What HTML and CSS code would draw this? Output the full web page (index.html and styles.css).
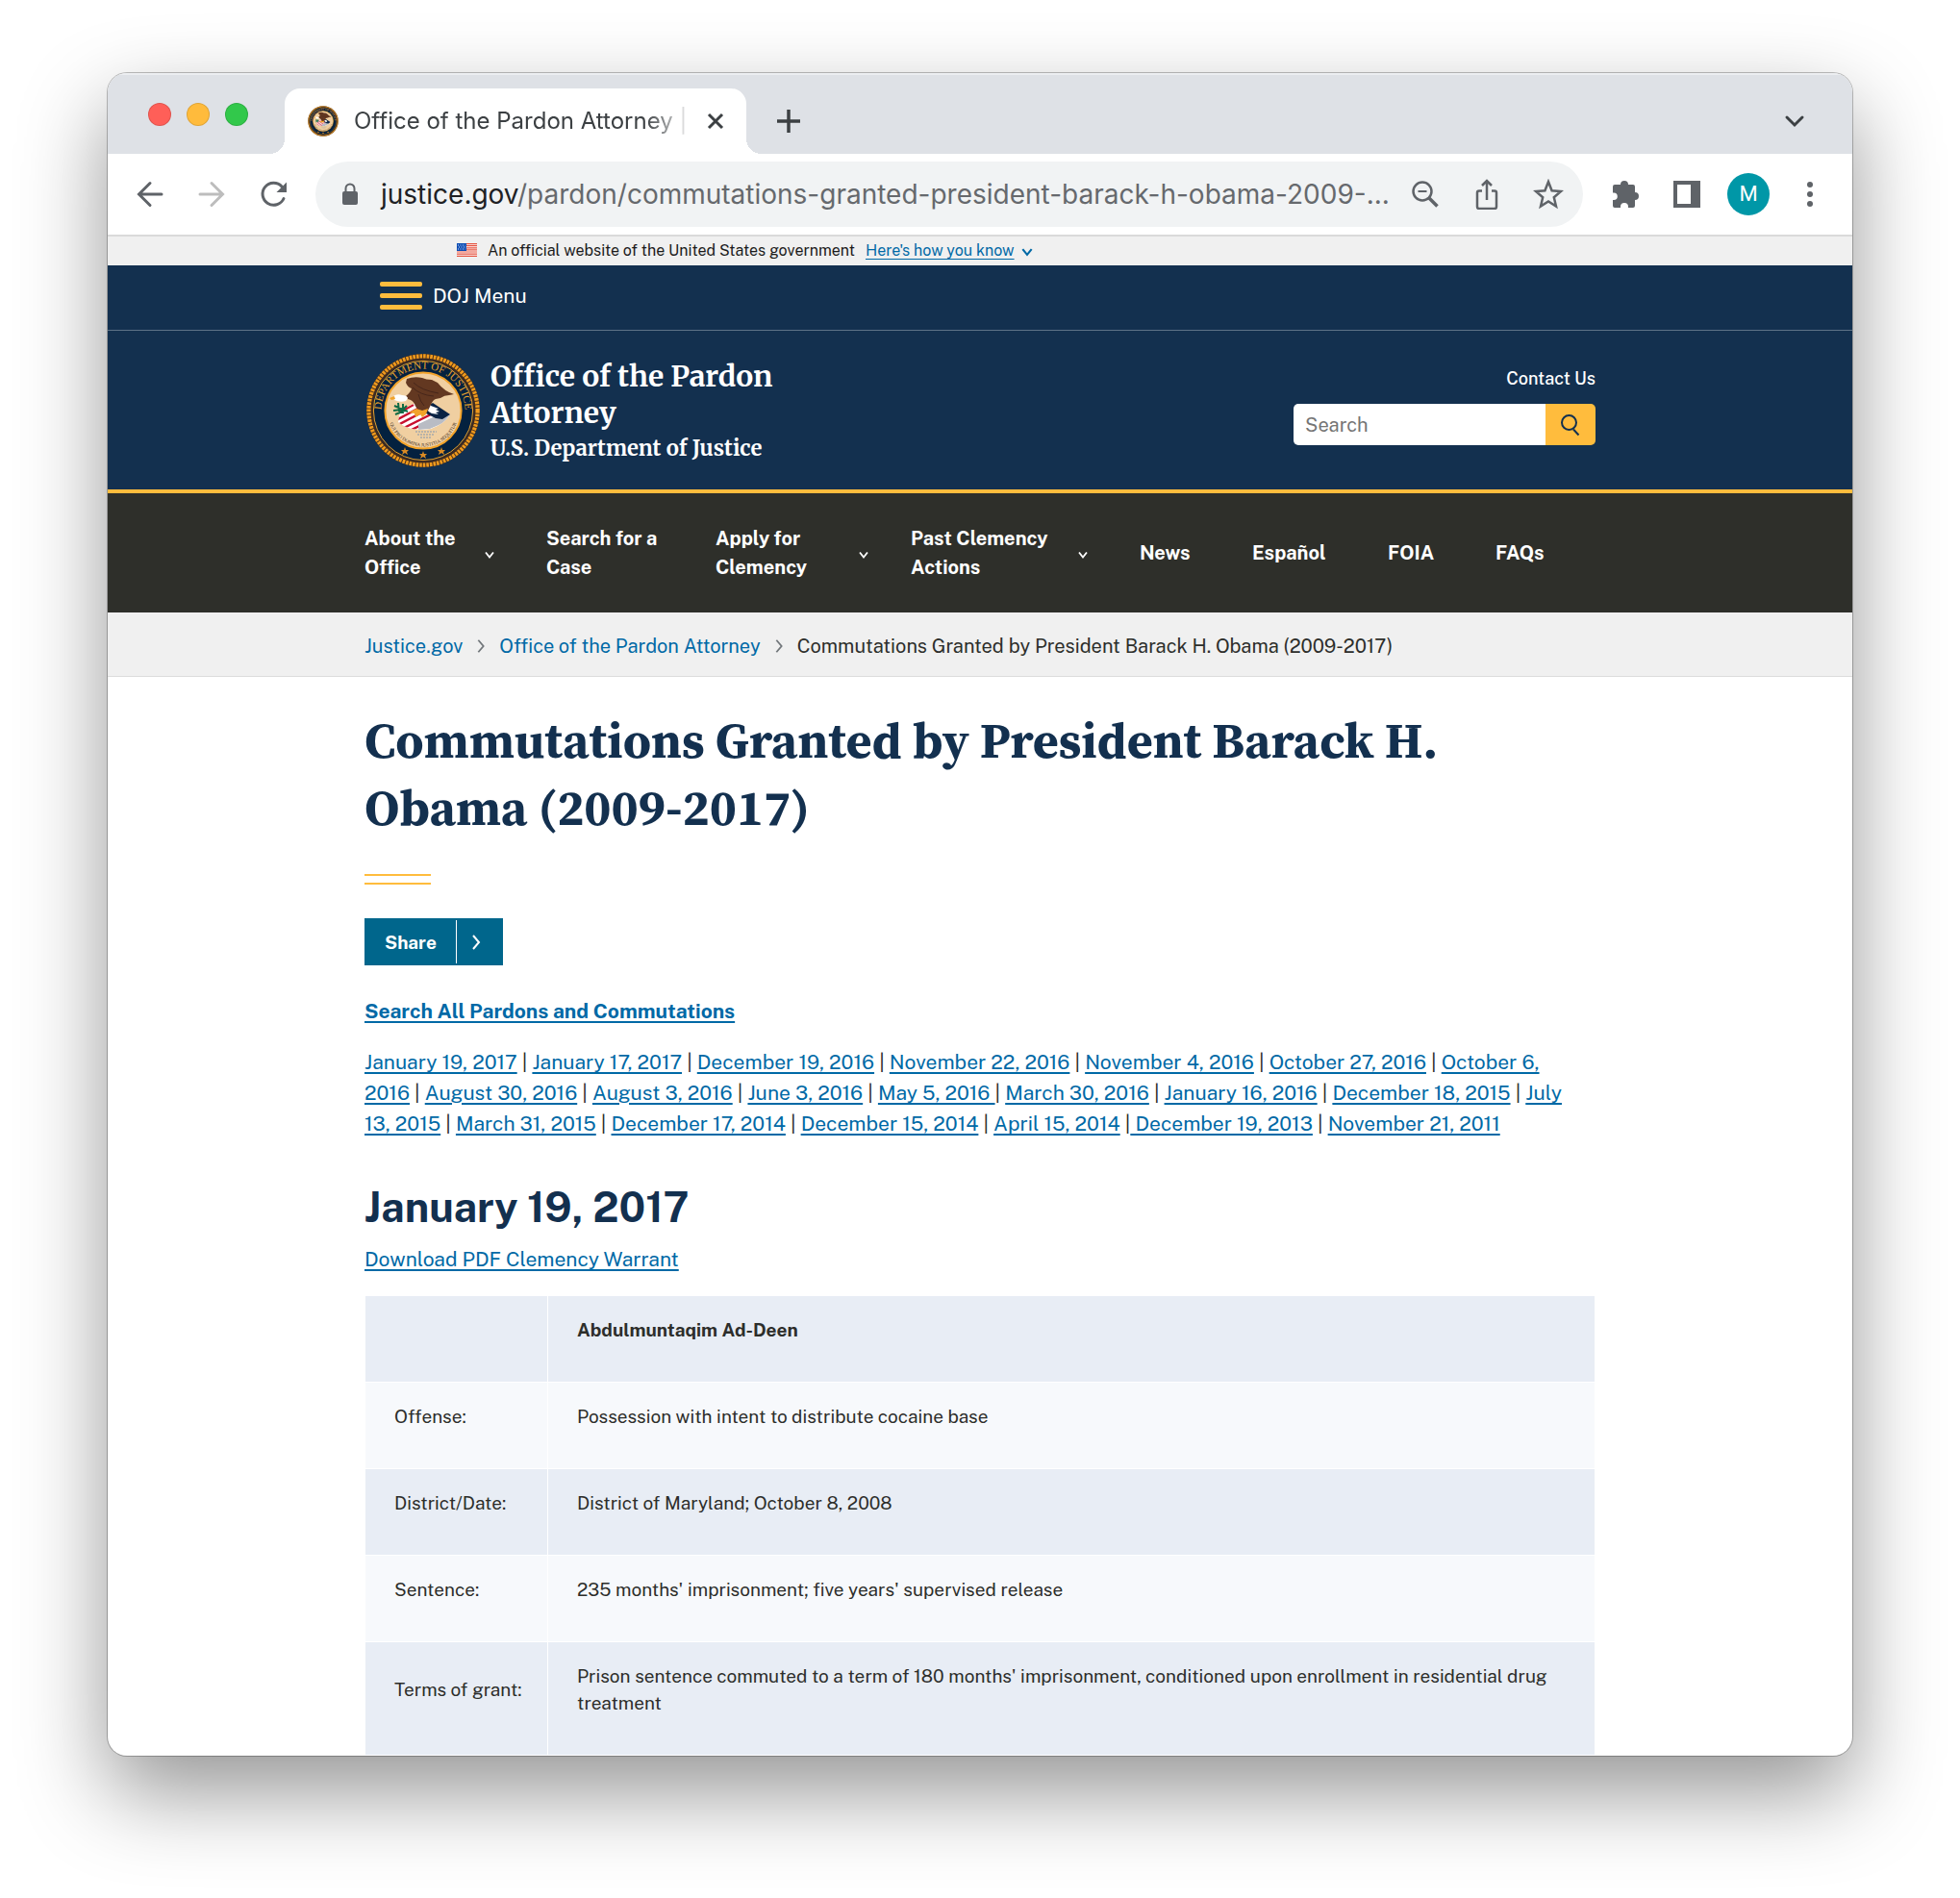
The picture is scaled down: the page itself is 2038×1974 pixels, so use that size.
FILE: index.html
```
<!DOCTYPE html>
<html lang="en">
<head>
<meta charset="utf-8">
<title>Office of the Pardon Attorney | Commutations Granted by President Barack H. Obama (2009-2017)</title>
<link rel="stylesheet" href="styles.css">
</head>
<body>
<svg class="defs" aria-hidden="true">
  <defs>
    <clipPath id="shield-clip"><path d="M36 60 L50 53 L66 55 L88 64 Q82 74 68 79 Q50 82 38 75 L34 72Z"/></clipPath>
    <path id="arc-top" d="M17.600 69.800 A43.500 43.500 0 1 1 102.400 69.800"/>
    <path id="arc-bottom" d="M23.500 53 A37.200 37.200 0 1 0 96.500 53"/>
    <symbol id="seal" viewBox="0 0 120 120">
      <circle cx="60" cy="60" r="59" fill="#4a3220"/>
      <circle cx="60" cy="60" r="56.600" fill="none" stroke="#f09a1c" stroke-width="4.200" stroke-dasharray="2.600 1"/>
      <circle cx="60" cy="60" r="53" fill="#04213f" stroke="#3d2b22" stroke-width="2"/>
      <circle cx="60" cy="60" r="51.600" fill="none" stroke="#e9a12c" stroke-width="1"/>
      <circle cx="60" cy="60" r="39.600" fill="#f0cfa1" stroke="#f2a32a" stroke-width="2"/>
      <text class="seal-name"><textPath href="#arc-top" startOffset="50%">DEPARTMENT OF JUSTICE</textPath></text>
      <g clip-path="url(#shield-clip)">
        <path fill="#fff" d="M30 50h60v32H30z"/>
        <path stroke="#c8102e" stroke-width="2.400" d="M28 66l22-12M28 72l34-18M30 77l40-21M36 80l38-19M44 82l36-18"/>
        <path fill="#b9bcc4" d="M55 74l26-12 8 2-8 9-14 6-12 1z"/>
      </g>
      <path fill="#0a2344" d="M62 57l8-5 18 12-8 5-7-1-10-5z"/>
      <path fill="#fff" d="M62 50q5 1 6 5l8 3-3 1 4 2-4 1 3 2-7-1q-6-3-6-7z"/>
      <path fill="#633821" d="M43 27q8-3 16-1 4 2 10 2l6 3q7 9 17 12l-5 1q-5 0-9 3l-5 1q-3 1-5 6l-4 8-7-1q-5-4-6-8-2-4-7-5l-2-3q5-4 6-8-4-1-6-6z"/>
      <path fill="none" stroke="#47261a" stroke-width="1" d="M50 31q8 8 26 11M49 36q8 8 22 9M55 43q2 8 6 12"/>
      <path fill="#fff" d="M29 45q4-3 9-1 5 0 6 3l-2 3q-6 2-12-1z"/>
      <path fill="#f2a32a" d="M30 45l-5 2 2 2 4-1zM45 62l8-4 6 2 6-2-2 6-4 3-2-3-5 3-1-4z"/>
      <path fill="none" stroke="#0f6b45" stroke-width="2" d="M30 55l14 6M34 52l1 9M39 53v10M29 60l9-1M31 64l10-4M43 55l-4 4"/>
      <path fill="none" stroke="#b9b3a8" stroke-width="2" stroke-dasharray="2 1" d="M52 82h22M54 85h18M57 88h12"/>
      <text class="seal-motto"><textPath href="#arc-bottom" startOffset="50%">QUI PRO DOMINA JUSTITIA SEQUITUR</textPath></text>
      <path fill="#d98a23" d="M41 98l1 3h3l-2 2 1 3-3-2-3 2 1-3-2-2h3zM60 102l1 3h3l-2 2 1 3-3-2-3 2 1-3-2-2h3zM79 98l1 3h3l-2 2 1 3-3-2-3 2 1-3-2-2h3z"/>
    </symbol>
    <symbol id="chevron-down" viewBox="0 0 12 12"><path d="M2 3.500l4 5 4-5" fill="none" stroke="currentColor" stroke-width="1.800"/></symbol>
    <symbol id="chevron-right" viewBox="0 0 10 18"><path d="M2 2l6 7-6 7" fill="none" stroke="currentColor" stroke-width="2"/></symbol>
  </defs>
</svg>

<div class="window">
  <div class="tabstrip">
    <div class="lights">
      <button class="light light-close" aria-label="Close window"></button>
      <button class="light light-min" aria-label="Minimize window"></button>
      <button class="light light-zoom" aria-label="Zoom window"></button>
    </div>
    <div class="tab">
      <svg class="favicon" aria-hidden="true"><use href="#seal"/></svg>
      <span class="tab-title">Office of the Pardon Attorney |</span>
      <button class="icon-btn" aria-label="Close tab"><svg viewBox="0 0 32 32"><path d="M9 9l14 14M23 9L9 23" stroke="#3c4043" stroke-width="3"/></svg></button>
    </div>
    <button class="icon-btn new-tab" aria-label="New tab"><svg viewBox="0 0 32 32"><path d="M16 4v24M4 16h24" stroke="#3c4043" stroke-width="3.500"/></svg></button>
    <button class="icon-btn tab-search" aria-label="Search tabs"><svg viewBox="0 0 32 32"><path d="M8 12l8 8 8-8" fill="none" stroke="#3c4043" stroke-width="3" stroke-linecap="round"/></svg></button>
  </div>

  <div class="toolbar">
    <div class="nav-buttons">
      <button class="icon-btn" aria-label="Back"><svg viewBox="0 0 32 32"><path d="M28 16H5M16 4.500L4.500 16 16 27.500" fill="none" stroke="#5f6368" stroke-width="3" stroke-linecap="round"/></svg></button>
      <button class="icon-btn" aria-label="Forward"><svg viewBox="0 0 32 32"><path d="M4 16h23M16 4.500L27.500 16 16 27.500" fill="none" stroke="#bdbdbd" stroke-width="3" stroke-linecap="round"/></svg></button>
      <button class="icon-btn" aria-label="Reload"><svg viewBox="0 0 32 32"><path d="M27 20.500A11.500 11.500 0 1 1 25 8" fill="none" stroke="#5f6368" stroke-width="3" stroke-linecap="round"/><path d="M30 3.500V14H19.500z" fill="#5f6368"/></svg></button>
    </div>
    <div class="omnibox">
      <button class="icon-btn" aria-label="View site information"><svg viewBox="0 0 32 32"><rect x="8" y="13" width="16" height="14" rx="2" fill="#5f6368"/><path d="M11.500 13v-3a4.500 4.500 0 0 1 9 0v3" fill="none" stroke="#5f6368" stroke-width="2"/></svg></button>
      <div class="url"><span class="url-host">justice.gov</span>/pardon/commutations-granted-president-barack-h-obama-2009-...</div>
      <div class="omni-actions">
        <button class="icon-btn" aria-label="Zoom"><svg viewBox="0 0 32 32"><path d="M20 20l8.500 8.500" stroke="#5f6368" stroke-width="3.500"/><circle cx="13" cy="13" r="9.500" fill="none" stroke="#5f6368" stroke-width="2.500"/><path d="M8.500 13h9" stroke="#5f6368" stroke-width="2"/></svg></button>
        <button class="icon-btn" aria-label="Share this page"><svg viewBox="0 0 32 32"><path d="M11 12.500H8q-2 0-2 2v14.500q0 2 2 2h16q2 0 2-2V14.500q0-2-2-2h-3M16 22V2M11 7l5-5 5 5" fill="none" stroke="#5f6368" stroke-width="2.500"/></svg></button>
        <button class="icon-btn" aria-label="Bookmark this tab"><svg viewBox="0 0 32 32"><path d="M16 3l3.600 9.200 9.400.800-7.200 6.200 2.200 9.300-8-5-8 5 2.200-9.300-7.200-6.200 9.400-.800z" fill="none" stroke="#5f6368" stroke-width="2.500"/></svg></button>
      </div>
    </div>
    <div class="tool-buttons">
      <button class="icon-btn" aria-label="Extensions"><svg viewBox="0 0 32 32"><path d="M5 6h6a4 4 0 1 1 8 0h5q2 0 2 2v6a4 4 0 1 1 0 8v6q0 2-2 2h-5v-1a4 4 0 0 0-8 0v1H5q-2 0-2-2v-6h1a3.800 3.800 0 0 0 0-7.600H3V8q0-2 2-2z" fill="#5f6368"/></svg></button>
      <button class="icon-btn" aria-label="Side panel"><svg viewBox="0 0 32 32"><path fill-rule="evenodd" d="M2 2h28v28H2zM6 6v20h14V6z" fill="#5f6368"/></svg></button>
      <button class="avatar" aria-label="Profile">M</button>
      <button class="icon-btn" aria-label="Menu"><svg viewBox="0 0 32 32"><g fill="#5f6368"><circle cx="16" cy="6" r="3"/><circle cx="16" cy="16" r="3"/><circle cx="16" cy="26" r="3"/></g></svg></button>
    </div>
  </div>

  <div class="page">
    <div class="gov-banner">
      <div class="container gov-inner">
        <svg class="flag" viewBox="0 0 21 14" aria-hidden="true"><path fill="#fff" d="M0 0h21v14H0z"/><path stroke="#e5523f" stroke-width="1.200" d="M0 .600h21M0 2.700h21M0 4.800h21M0 6.900h21M0 9h21M0 11.200h21M0 13.400h21"/><path fill="#0b4bb3" d="M0 0h10v8H0z"/><path stroke="#dbe6fb" stroke-width="1" stroke-dasharray="1 1.500" d="M1 2h8M2 4h8M1 6h8"/></svg>
        <span>An official website of the United States government</span>
        <a href="#how">Here's how you know</a>
        <svg class="banner-chev" aria-hidden="true"><use href="#chevron-down"/></svg>
      </div>
    </div>

    <div class="doj-bar">
      <div class="container">
        <button class="doj-menu"><span class="bars"><i></i><i></i><i></i></span>DOJ Menu</button>
      </div>
    </div>

    <header class="site-header">
      <div class="container header-inner">
        <svg class="seal" aria-hidden="true"><use href="#seal"/></svg>
        <div class="brand">
          <div class="brand-name">Office of the Pardon Attorney</div>
          <div class="brand-dept">U.S. Department of Justice</div>
        </div>
        <div class="header-tools">
          <a class="contact" href="#contact">Contact Us</a>
          <form class="search">
            <input type="search" placeholder="Search" aria-label="Search">
            <button type="button" aria-label="Submit search"><svg viewBox="0 0 24 24"><path d="M15 16.500l5.500 6" stroke="#13304f" stroke-width="2"/><circle cx="10.500" cy="9.500" r="7.500" fill="none" stroke="#13304f" stroke-width="2"/></svg></button>
          </form>
        </div>
      </div>
    </header>

    <nav class="main-nav" aria-label="Primary">
      <ul class="container nav-list">
        <li><button class="nav-btn">About the<br>Office<svg class="chev"><use href="#chevron-down"/></svg></button></li>
        <li><a href="#search">Search for a<br>Case</a></li>
        <li><button class="nav-btn nav-btn-wide">Apply for<br>Clemency<svg class="chev"><use href="#chevron-down"/></svg></button></li>
        <li><button class="nav-btn">Past Clemency<br>Actions<svg class="chev"><use href="#chevron-down"/></svg></button></li>
        <li><a href="#news">News</a></li>
        <li><a href="#es">Español</a></li>
        <li><a href="#foia">FOIA</a></li>
        <li><a href="#faqs">FAQs</a></li>
      </ul>
    </nav>

    <nav class="crumbs" aria-label="Breadcrumb">
      <ol class="container crumb-list">
        <li><a href="#home">Justice.gov</a></li>
        <li><svg class="crumb-sep" aria-hidden="true"><use href="#chevron-right"/></svg><a href="#office">Office of the Pardon Attorney</a></li>
        <li><svg class="crumb-sep" aria-hidden="true"><use href="#chevron-right"/></svg>Commutations Granted by President Barack H. Obama (2009-2017)</li>
      </ol>
    </nav>

    <main class="container content">
      <h1>Commutations Granted by President Barack H. Obama (2009-2017)</h1>
      <div class="rule"></div>
      <button class="share"><span class="share-label">Share</span><span class="share-arrow"><svg><use href="#chevron-right"/></svg></span></button>
      <p class="all"><a href="#all">Search All Pardons and Commutations</a></p>
      <p class="dates"><a href="#d1">January 19, 2017</a> | <a href="#d2">January 17, 2017</a> | <a href="#d3">December 19, 2016</a> | <a href="#d4">November 22, 2016</a> | <a href="#d5">November 4, 2016</a> | <a href="#d6">October 27, 2016</a> | <a href="#d7">October 6, 2016</a> | <a href="#d8">August 30, 2016</a> | <a href="#d9">August 3, 2016</a> | <a href="#d10">June 3, 2016</a> | <a href="#d11">May 5, 2016 </a>| <a href="#d12">March 30, 2016</a> | <a href="#d13">January 16, 2016</a> | <a href="#d14">December 18, 2015</a> | <a href="#d15">July 13, 2015</a> | <a href="#d16">March 31, 2015</a> | <a href="#d17">December 17, 2014</a> | <a href="#d18">December 15, 2014</a> | <a href="#d19">April 15, 2014</a> |<a href="#d20"> December 19, 2013</a> | <a href="#d21">November 21, 2011</a></p>
      <h2>January 19, 2017</h2>
      <p class="warrant"><a href="#pdf">Download PDF Clemency Warrant</a></p>
      <table>
        <colgroup><col class="col-label"><col></colgroup>
        <tbody>
          <tr><td></td><th scope="col">Abdulmuntaqim Ad-Deen</th></tr>
          <tr><td>Offense:</td><td>Possession with intent to distribute cocaine base</td></tr>
          <tr><td>District/Date:</td><td>District of Maryland; October 8, 2008</td></tr>
          <tr><td>Sentence:</td><td>235 months' imprisonment; five years' supervised release</td></tr>
          <tr><td>Terms of grant:</td><td>Prison sentence commuted to a term of 180 months' imprisonment, conditioned upon enrollment in residential drug treatment</td></tr>
        </tbody>
      </table>
    </main>
  </div>
</div>
</body>
</html>
```
FILE: styles.css
```
* { box-sizing: border-box; }

body {
  margin: 0;
  height: 100vh;
  padding: 76px 112px 148px;
  background: #fff;
  color: #2d2e2b;
  font-family: "Public Sans", Inter, "Liberation Sans", sans-serif;
  overflow: hidden;
}

button, input { font: inherit; color: inherit; border: 0; padding: 0; background: none; }
ul, ol { list-style: none; margin: 0; padding: 0; }
p, h1, h2 { margin: 0; }
a { color: #0069a6; }
svg { display: block; }
.defs { position: absolute; width: 0; height: 0; }

.seal-name, .seal-motto { font-family: "Liberation Serif", serif; text-anchor: middle; }
.seal-name { font-size: 11px; fill: #e9a12c; }
.seal-motto { font-size: 5px; fill: #3b2a20; }

/* Browser window */
.window {
  display: flex;
  flex-direction: column;
  height: 100%;
  border-radius: 20px;
  overflow: hidden;
  background: #fff;
  box-shadow: 0 0 0 1px rgba(0, 0, 0, .25), 0 38px 90px rgba(0, 0, 0, .42);
}

.icon-btn { width: 32px; height: 32px; flex: none; }
.icon-btn svg { width: 32px; height: 32px; }

.tabstrip {
  display: flex;
  align-items: flex-end;
  flex: none;
  height: 84px;
  padding: 0 44px 0 42px;
  background: #dee1e6;
  box-shadow: inset 0 2px 0 #eceef1;
  font-family: Inter, "Liberation Sans", sans-serif;
}
.lights { display: flex; gap: 16px; padding-bottom: 29px; }
.light { width: 24px; height: 24px; border-radius: 50%; border: 1px solid rgba(0, 0, 0, .12); }
.light-close { background: #ff5f58; }
.light-min { background: #ffbb3c; }
.light-zoom { background: #32c84b; }

.tab {
  position: relative;
  display: flex;
  align-items: center;
  width: 480px;
  height: 68px;
  margin-left: 38px;
  padding: 0 16px 0 24px;
  border-radius: 16px 16px 0 0;
  background: #fff;
}
.tab::before, .tab::after {
  content: "";
  position: absolute;
  bottom: 0;
  width: 16px;
  height: 16px;
}
.tab::before { right: 100%; background: radial-gradient(circle at 0 0, transparent 16px, #fff 16px); }
.tab::after { left: 100%; background: radial-gradient(circle at 100% 0, transparent 16px, #fff 16px); }
.favicon { width: 32px; height: 32px; flex: none; }
.tab-title {
  flex: 1;
  margin: 0 8px 0 16px;
  font-size: 24px;
  line-height: 32px;
  color: #3c4043;
  white-space: nowrap;
  -webkit-mask-image: linear-gradient(90deg, #000 86%, transparent);
  mask-image: linear-gradient(90deg, #000 86%, transparent);
}
.new-tab { margin: 0 auto 18px 28px; }
.tab-search { margin-bottom: 18px; }

.toolbar {
  display: flex;
  align-items: center;
  flex: none;
  gap: 28px;
  height: 86px;
  padding: 0 28px;
  border-bottom: 2px solid #dadada;
}
.nav-buttons, .tool-buttons { display: flex; align-items: center; gap: 32px; }
.tool-buttons { gap: 26px; }
.tool-buttons .icon-btn:first-child { margin-right: 6px; }
.omnibox {
  display: flex;
  align-items: center;
  flex: 1;
  height: 68px;
  padding: 0 20px;
  border-radius: 34px;
  background: #f1f3f4;
}
.url {
  flex: 1;
  margin-left: 16px;
  font: 28px/36px Inter, "Liberation Sans", sans-serif;
  color: #66696d;
  white-space: nowrap;
}
.url-host { color: #202124; }
.omni-actions { display: flex; gap: 32px; }
.avatar {
  width: 44px;
  height: 44px;
  border-radius: 50%;
  background: #0097a7;
  color: #fff;
  font: 22px/44px Roboto, sans-serif;
}

/* Web page */
.page { flex: 1; overflow: hidden; }
.container { width: 100%; max-width: 1280px; margin: 0 auto; }

.gov-banner { background: #f0f0f0; color: #1b1b1b; }
.gov-inner {
  display: flex;
  align-items: center;
  height: 30px;
  padding: 0 0 2px 96px;
  font-size: 16px;
}
.flag { width: 21px; height: 14px; margin-right: 11px; }
.gov-inner a { margin: 0 6px 0 11px; text-underline-offset: 3px; }
.banner-chev { width: 14px; height: 14px; margin-top: 4px; color: #0069a6; }

.doj-bar { background: #13304f; border-bottom: 1px solid #5e7287; }
.doj-menu {
  display: flex;
  align-items: center;
  gap: 11px;
  height: 67px;
  padding: 0 0 4px 16px;
  color: #fff;
  font-size: 21px;
}
.bars { display: grid; gap: 7px; width: 44px; }
.bars i { height: 5px; border-radius: 2px; background: #ffbc3d; }

.site-header { background: #13304f; border-bottom: 4px solid #ffbc3d; color: #fff; }
.header-inner { display: flex; align-items: center; height: 165px; }
.seal { width: 120px; height: 120px; margin: 0 10px 0 1px; }
.brand {
  width: 400px;
  padding-top: 2px;
  font-family: Merriweather, "Noto Serif", "Liberation Serif", serif;
  font-weight: 700;
}
.brand-name { max-width: 320px; font-size: 30px; line-height: 38px; }
.brand-dept { font-size: 22px; line-height: 36px; }
.header-tools { width: 314px; margin-left: auto; padding-bottom: 8px; text-align: right; }
.contact {
  display: block;
  margin-bottom: 14px;
  color: #fff;
  font-size: 18px;
  font-weight: 500;
  line-height: 24px;
  text-decoration: none;
}
.search { display: flex; height: 43px; border-radius: 5px; overflow: hidden; }
.search input { flex: 1; min-width: 0; padding: 0 12px; background: #fff; font-size: 20px; appearance: none; }
.search input::placeholder { color: #757575; opacity: 1; }
.search button { display: grid; place-items: center; width: 52px; background: #ffbc3d; }
.search svg { width: 24px; height: 24px; }

.main-nav { background: #2e2f2a; color: #fff; }
.nav-list {
  display: grid;
  grid-template-columns: 189px 176px 203px 238px 117px 141px 112px auto;
  align-items: center;
  height: 124px;
  font-size: 20px;
  font-weight: 700;
  line-height: 30px;
}
.nav-list a { color: #fff; text-decoration: none; }
.nav-btn { position: relative; width: 100%; text-align: left; }
.chev { position: absolute; right: 53px; top: 26px; width: 12px; height: 12px; }
.nav-btn-wide .chev { right: 43px; }

.crumbs { background: #f0f0f0; border-bottom: 1px solid #dcdcdc; }
.crumb-list { display: flex; align-items: center; height: 66px; padding-top: 3px; font-size: 20px; line-height: 30px; }
.crumb-list li { display: flex; align-items: center; }
.crumb-list a { text-decoration: none; }
.crumb-sep { width: 10px; height: 16px; margin: 0 14px; color: #71767a; }

.content { padding-top: 31px; }
h1, h2 { color: #13304f; }
h1 {
  font: 700 52px/70px "Source Serif 4", "Noto Serif", "Liberation Serif", serif;
}
.rule { width: 69px; height: 11px; margin-top: 34px; border: solid #ffbc3d; border-width: 2px 0; }
.share {
  display: flex;
  align-items: center;
  height: 49px;
  margin-top: 35px;
  background: #00668c;
  color: #fff;
  font-size: 19px;
  font-weight: 700;
}
.share-label { padding: 0 20px 0 21px; }
.share-arrow { display: grid; place-items: center; width: 49px; height: 45px; padding-right: 8px; border-left: 1px solid #fff; }
.share-arrow svg { width: 10px; height: 18px; }

.all, .dates, .warrant { font-size: 21px; line-height: 32px; }
.content a { text-decoration-thickness: 2px; text-underline-offset: 3px; }
.all { margin-top: 32px; font-weight: 700; }
.dates { margin-top: 21px; padding-right: 16px; }
h2 { margin-top: 46px; font-size: 43px; line-height: 50px; }
.warrant { margin: 13px 0 21px; }

table { width: 100%; border-collapse: collapse; font-size: 19px; line-height: 28px; }
.col-label { width: 190px; }
td, th { height: 90px; padding: 21px 30px 40px; border: 1px solid #fff; text-align: left; white-space: normal; }
td:first-child { white-space: nowrap; padding-right: 0; }
tr:nth-child(odd) { background: #e8edf5; }
tr:nth-child(even) { background: #f7f9fc; }
```
